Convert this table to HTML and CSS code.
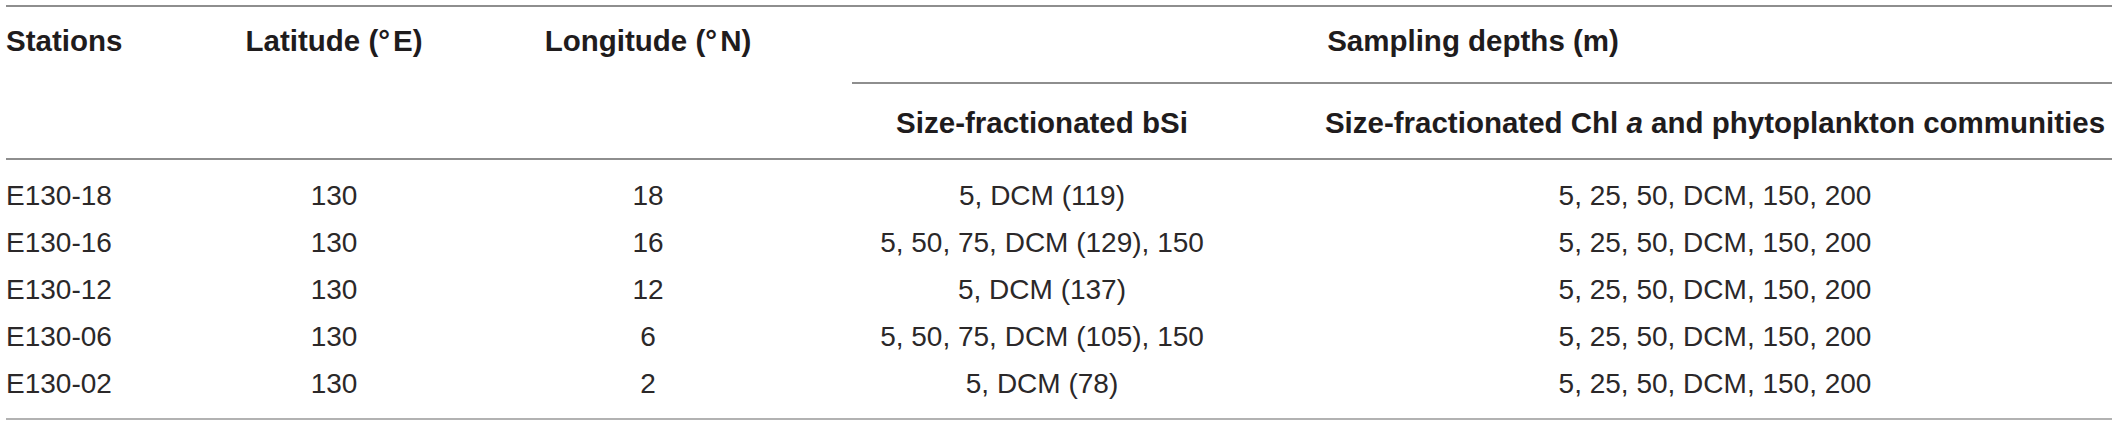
FILE: index.html
```html
<!DOCTYPE html>
<html lang="en">
<head>
<meta charset="utf-8">
<title>Sampling stations</title>
<link rel="stylesheet" href="styles.css">
</head>
<body>
<table class="tbl">
  <colgroup>
    <col class="w-st">
    <col class="w-lat">
    <col class="w-lon">
    <col class="w-bsi">
    <col class="w-chl">
  </colgroup>
  <thead>
    <tr>
      <th class="h-span c-st" rowspan="2">Stations</th>
      <th class="h-span c-lat" rowspan="2">Latitude (<span class="deg">°</span>E)</th>
      <th class="h-span c-lon" rowspan="2">Longitude (<span class="deg">°</span>N)</th>
      <th class="h-group" colspan="2">Sampling depths (m)</th>
    </tr>
    <tr>
      <th class="h-sub c-bsi">Size-fractionated bSi</th>
      <th class="h-sub c-chl">Size-fractionated Chl <i>a</i> and phytoplankton communities</th>
    </tr>
  </thead>
  <tbody>
    <tr><td class="c-st">E130-18</td><td class="c-lat">130</td><td class="c-lon">18</td><td class="c-bsi">5, DCM (119)</td><td class="c-chl">5, 25, 50, DCM, 150, 200</td></tr>
    <tr><td class="c-st">E130-16</td><td class="c-lat">130</td><td class="c-lon">16</td><td class="c-bsi">5, 50, 75, DCM (129), 150</td><td class="c-chl">5, 25, 50, DCM, 150, 200</td></tr>
    <tr><td class="c-st">E130-12</td><td class="c-lat">130</td><td class="c-lon">12</td><td class="c-bsi">5, DCM (137)</td><td class="c-chl">5, 25, 50, DCM, 150, 200</td></tr>
    <tr><td class="c-st">E130-06</td><td class="c-lat">130</td><td class="c-lon">6</td><td class="c-bsi">5, 50, 75, DCM (105), 150</td><td class="c-chl">5, 25, 50, DCM, 150, 200</td></tr>
    <tr><td class="c-st">E130-02</td><td class="c-lat">130</td><td class="c-lon">2</td><td class="c-bsi">5, DCM (78)</td><td class="c-chl">5, 25, 50, DCM, 150, 200</td></tr>
  </tbody>
</table>
</body>
</html>
```

FILE: styles.css
```css
html, body {
  margin: 0;
  padding: 0;
  background: #ffffff;
}

body {
  font-family: "Liberation Sans", Arial, Helvetica, sans-serif;
  color: #231f20;
}

.tbl {
  margin: 5px 0 0 6px;
  width: 2106px;
  table-layout: fixed;
  border-collapse: separate;
  border-spacing: 0;
  border-top: 2px solid #8e8e8e;
  border-bottom: 2px solid #b2b2b2;
}

.w-st { width: 184px; }
.w-lat { width: 288px; }
.w-lon { width: 374px; }
.w-bsi { width: 380px; }
.w-chl { width: 880px; }

th {
  font-weight: bold;
  font-size: 29.5px;
  line-height: 30px;
  padding: 0;
  white-space: nowrap;
  color: #1f1c1d;
}

th i {
  font-style: italic;
}

.deg {
  margin-right: 3px;
}

.h-span {
  vertical-align: top;
  padding-top: 19px;
  border-bottom: 2px solid #8e8e8e;
}

.h-group {
  text-align: center;
  padding: 19px 18px 26px 0;
  border-bottom: 2px solid #8e8e8e;
}

.h-sub {
  padding-top: 24px;
  padding-bottom: 20px;
  border-bottom: 2px solid #8e8e8e;
}

td {
  font-size: 28px;
  line-height: 47px;
  padding: 0;
  white-space: nowrap;
  color: #2b2829;
}

tbody tr:first-child td {
  padding-top: 12px;
}

tbody tr:last-child td {
  padding-bottom: 11px;
}

.c-st { text-align: left; }
.c-lat { text-align: center; }
.c-lon { text-align: center; padding-right: 34px; }
.c-bsi { text-align: center; }
.c-chl { text-align: center; padding-left: 86px; }
```
